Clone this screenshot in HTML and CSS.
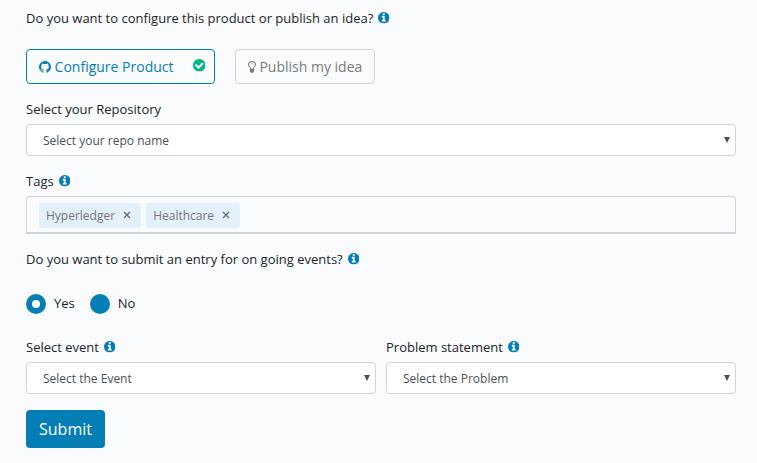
FILE: index.html
```html
<!DOCTYPE html>
<html lang="en">
<head>
<meta charset="utf-8">
<title>Submit product</title>
<link rel="stylesheet" href="styles.css">
</head>
<body>
<svg class="sprite" aria-hidden="true">
  <symbol id="info" viewBox="128 128 1536 1536"><path d="M1152 1376v-160q0-14-9-23t-23-9h-96v-512q0-14-9-23t-23-9h-320q-14 0-23 9t-9 23v160q0 14 9 23t23 9h96v320h-96q-14 0-23 9t-9 23v160q0 14 9 23t23 9h448q14 0 23-9t9-23zm-128-896v-160q0-14-9-23t-23-9h-192q-14 0-23 9t-9 23v160q0 14 9 23t23 9h192q14 0 23-9t9-23zm640 416q0 209-103 385.500t-279.500 279.500-385.500 103-385.500-103-279.500-279.500-103-385.500 103-385.500 279.500-279.500 385.500-103 385.500 103 279.500 279.500 103 385.500z"/></symbol>
  <symbol id="check" viewBox="128 128 1536 1536"><path d="M1412 734q0-28-18-46l-91-90q-19-19-45-19t-45 19l-408 407-226-226q-19-19-45-19t-45 19l-91 90q-18 18-18 46 0 27 18 45l362 362q19 19 45 19 27 0 46-19l543-543q18-18 18-45zm252 162q0 209-103 385.500t-279.500 279.500-385.500 103-385.500-103-279.500-279.500-103-385.500 103-385.500 279.500-279.500 385.500-103 385.500 103 279.500 279.500 103 385.500z"/></symbol>
  <symbol id="github" viewBox="128 128 1536 1536"><path d="M896 128q209 0 385.500 103t279.500 279.500 103 385.500q0 251-146.500 451.500t-378.500 277.500q-27 5-40-7t-13-30q0-3 .5-76.500t.5-134.500q0-97-52-142 57-6 102.500-18t94-39 81-66.500 53-105 20.500-150.500q0-119-79-206 37-91-8-204-28-9-81 11t-92 44l-38 24q-93-26-192-26t-192 26q-16-11-42.500-27t-83.500-38.500-85-13.500q-45 113-8 204-79 87-79 206 0 85 20.500 150t52.500 105 80.500 67 94 39 102.500 18q-39 36-49 103-21 10-45 15t-57 5-65.500-21.500-55.500-62.500q-19-32-48.500-52t-49.500-24l-20-3q-21 0-29 4.500t-5 11.500 9 14 13 12l7 5q22 10 43.500 38t31.500 51l10 23q13 38 44 61.500t67 30 69.500 7 55.500-3.500l23-4q0 38 .5 88.500t.5 54.500q0 18-13 30t-40 7q-232-77-378.500-277.500t-146.500-451.500q0-209 103-385.500t279.500-279.500 385.500-103z"/></symbol>
  <symbol id="bulb" viewBox="384 128 1024 1536"><path d="M1120 576q0 13-9.500 22.500t-22.500 9.500-22.500-9.500-9.500-22.500q0-46-54-71t-106-25q-13 0-22.500-9.500t-9.500-22.500 9.500-22.500 22.500-9.500q50 0 99.500 16t87 54 37.500 90zm160 0q0-72-34.500-134t-90-101.500-123-62-136.500-22.500-136.500 22.500-123 62-90 101.500-34.500 134q0 101 68 180 10 11 30.500 33t30.500 33q128 153 141 298h228q13-145 141-298 10-11 30.500-33t30.500-33q68-79 68-180zm128 0q0 155-103 268-45 49-74.500 87t-59.500 95.500-34 107.500q47 28 47 82 0 37-25 64 25 27 25 64 0 52-45 81 13 23 13 47 0 46-31.500 71t-77.500 25q-20 44-60 70t-87 26-87-26-60-70q-46 0-77.500-25t-31.500-71q0-24 13-47-45-29-45-81 0-37 25-64-25-27-25-64 0-54 47-82-4-50-34-107.500t-59.500-95.500-74.500-87q-103-113-103-268 0-99 44.500-184.500t117-142 164-89 186.500-32.500 186.500 32.500 164 89 117 142 44.500 184.500z"/></symbol>
</svg>
<form class="form">
  <div class="label">Do you want to configure this product or publish an idea?<svg class="info"><use href="#info"/></svg></div>
  <div class="choices">
    <button type="button" class="choice active"><svg class="github"><use href="#github"/></svg>Configure Product<svg class="check"><use href="#check"/></svg></button>
    <button type="button" class="choice"><svg class="bulb"><use href="#bulb"/></svg>Publish my idea</button>
  </div>
  <div class="label">Select your Repository</div>
  <div class="select repo"><span>Select your repo name</span><svg class="arrow" viewBox="0 0 6 6"><path d="M0 0h6L3 6z"/></svg></div>
  <div class="label">Tags<svg class="info"><use href="#info"/></svg></div>
  <div class="tags">
    <span class="tag">Hyperledger<svg class="close" viewBox="0 0 8 8"><path d="M1 1l6 6M7 1L1 7"/></svg></span>
    <span class="tag">Healthcare<svg class="close" viewBox="0 0 8 8"><path d="M1 1l6 6M7 1L1 7"/></svg></span>
  </div>
  <div class="label">Do you want to submit an entry for on going events?<svg class="info"><use href="#info"/></svg></div>
  <div class="radios">
    <span class="radio checked"></span><span class="option yes">Yes</span>
    <span class="radio"></span><span class="option">No</span>
  </div>
  <div class="columns">
    <div>
      <div class="label">Select event<svg class="info"><use href="#info"/></svg></div>
      <div class="select"><span>Select the Event</span><svg class="arrow" viewBox="0 0 6 6"><path d="M0 0h6L3 6z"/></svg></div>
    </div>
    <div>
      <div class="label">Problem statement<svg class="info"><use href="#info"/></svg></div>
      <div class="select"><span>Select the Problem</span><svg class="arrow" viewBox="0 0 6 6"><path d="M0 0h6L3 6z"/></svg></div>
    </div>
  </div>
  <button type="button" class="submit">Submit</button>
</form>
</body>
</html>
```
FILE: styles.css
```css
* { box-sizing: border-box; }
body {
  margin: 0;
  background: #fafbfd;
  color: #212529;
  font: 13px/20px "Open Sans", "Noto Sans", sans-serif;
}
svg { display: block; flex: none; fill: currentColor; }
.sprite { width: 0; height: 0; }
.form { width: 710px; margin-left: 26px; padding-top: 8px; }
.label { display: flex; align-items: center; height: 20px; white-space: nowrap; }
.info { width: 11.5px; height: 11.5px; margin-left: 5px; color: #057eb6; }
.choices { display: flex; gap: 20px; margin: 21px 0 15px; }
.choice {
  display: flex;
  align-items: center;
  width: 140px;
  height: 35px;
  padding: 0 12px;
  border: 1px solid #ced4da;
  border-radius: 4px;
  background: transparent;
  color: #7b7b7b;
  font: 14px/20px "Open Sans", "Noto Sans", sans-serif;
  white-space: nowrap;
}
.choice.active { width: 189px; padding-right: 9px; border-color: #057eb6; color: #057eb6; }
.github { width: 12px; height: 12px; margin: 1px 3.6px 0 0; }
.bulb { width: 8px; height: 12px; margin-right: 3.4px; }
.check { width: 12.5px; height: 12.5px; margin: 0 0 2px auto; color: #00b887; }
.select {
  display: flex;
  align-items: center;
  justify-content: space-between;
  height: 32px;
  padding: 0 5px 0 16px;
  border: 1px solid #ced4da;
  border-radius: 4px;
  background: #fff;
  color: #495057;
  font-size: 12px;
}
.select span { padding-top: 1px; }
.repo { margin: 5px 0 15px; }
.arrow { width: 6px; height: 6px; }
.tags {
  display: flex;
  gap: 5px;
  height: 38px;
  margin: 5px 0 15px;
  padding: 6px 12px;
  border: 1px solid #ced4da;
  border-bottom-width: 2px;
  border-radius: 4px 4px 0 0;
}
.tag {
  display: flex;
  align-items: center;
  height: 25px;
  padding: 0 10px 0 7px;
  border-radius: 3px;
  background: #e3f1ff;
  color: #757575;
  font-size: 12px;
}
.close { width: 8px; height: 8px; margin: 0 0 2px 8px; fill: none; stroke: #666; stroke-width: 1.3; }
.radios { display: flex; align-items: center; height: 20px; margin: 25px 0 23px; }
.radio { width: 20px; height: 20px; margin-right: 8px; border-radius: 50%; background: #057eb6; }
.radio.checked { border: 6px solid #057eb6; background: #fff; }
.option { padding-bottom: 2px; }
.yes { margin-right: 15px; }
.columns { display: grid; grid-template-columns: 1fr 1fr; gap: 10px; }
.columns .select { margin-top: 5px; }
.submit {
  display: block;
  width: 79px;
  height: 38px;
  margin-top: 16px;
  padding: 0;
  border: 0;
  border-radius: 4px;
  background: #057eb6;
  color: #fff;
  font: 16px/24px "Open Sans", "Noto Sans", sans-serif;
}
```
